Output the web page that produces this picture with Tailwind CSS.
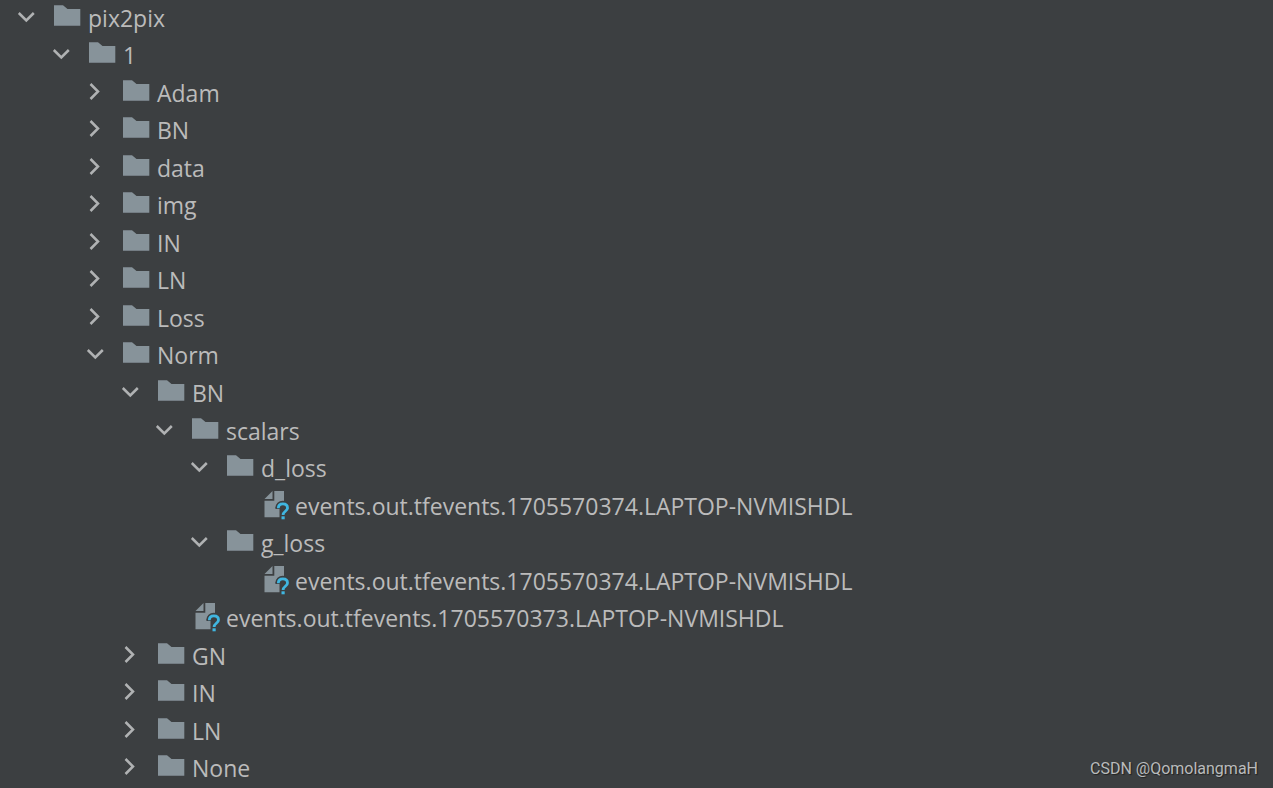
<!DOCTYPE html>
<html lang="en">
<head>
<meta charset="utf-8">
<meta name="viewport" content="width=device-width, initial-scale=1">
<title>pix2pix</title>
<script src="https://cdn.jsdelivr.net/npm/@tailwindcss/browser@4"></script>
</head>
<body class="bg-[#3c3f41] text-[#bbbbbb] font-['Open_Sans','Noto_Sans',sans-serif]">
<svg class="hidden" aria-hidden="true">
  <symbol id="down" viewBox="0 0 20 32"><path d="M2.800 10l7.500 7.500 7.500-7.500" fill="none" stroke="#b0b2b3" stroke-width="2.500"/></symbol>
  <symbol id="right" viewBox="0 0 20 32"><path d="M5.500 6l7.500 7.500-7.500 7.500" fill="none" stroke="#b0b2b3" stroke-width="2.500"/></symbol>
  <symbol id="folder" viewBox="0 0 32 32"><path d="M2 2.200h9l4.500 3.800H28.300V22.800H2z" fill="#87939a"/></symbol>
  <symbol id="file" viewBox="0 0 32 32">
    <path d="M13.500 0v8H5.500z" fill="#87939a"/>
    <path d="M15.300 0h9.700v10.500c-5 0-8.500 3-8.500 7.500h4v8.300H5.500V9.700h9.800z" fill="#87939a"/>
    <path d="M19.300 17.300c0-2.900 1.900-4.500 4.600-4.500s4.600 1.500 4.600 4.100c0 3.400-4.400 3.400-4.400 7.100" fill="none" stroke="#3c3f41" stroke-width="6"/>
    <path d="M19.300 17.300c0-2.900 1.900-4.500 4.600-4.500s4.600 1.500 4.600 4.100c0 3.400-4.400 3.400-4.400 7.100" fill="none" stroke="#40b6e0" stroke-width="2.800"/>
    <path d="M22.500 25.300h3.200v3h-3.200z" fill="#40b6e0"/>
  </symbol>
</svg>
<main class="relative min-h-screen border-b border-[#343236]">
  <ul id="tree" role="tree" aria-label="Project files" class="grid min-h-screen auto-rows-fr text-[23px] leading-8"></ul>
  <p class="absolute right-[15px] bottom-[7px] font-[Roboto,sans-serif] text-base leading-6 text-[#b9bbbc] [text-shadow:1px_1px_1px_#222]">CSDN @QomolangmaH</p>
</main>
<script>
const indents = ['pl-4', 'pl-[51px]', 'pl-[85px]', 'pl-[120px]', 'pl-[154px]', 'pl-[189px]', 'pl-[223px]'];
const entries = [
  [0, 'pix2pix', 'down'], [1, '1', 'down'],
  [2, 'Adam', 'right'], [2, 'BN', 'right'], [2, 'data', 'right'], [2, 'img', 'right'],
  [2, 'IN', 'right'], [2, 'LN', 'right'], [2, 'Loss', 'right'], [2, 'Norm', 'down'],
  [3, 'BN', 'down'], [4, 'scalars', 'down'], [5, 'd_loss', 'down'],
  [6, 'events.out.tfevents.1705570374.LAPTOP-NVMISHDL'],
  [5, 'g_loss', 'down'],
  [6, 'events.out.tfevents.1705570374.LAPTOP-NVMISHDL'],
  [4, 'events.out.tfevents.1705570373.LAPTOP-NVMISHDL'],
  [3, 'GN', 'right'], [3, 'IN', 'right'], [3, 'LN', 'right'], [3, 'None', 'right'],
];
document.getElementById('tree').innerHTML = entries.map(([level, name, state]) => `
  <li role="treeitem" aria-level="${level + 1}" ${state ? `aria-expanded="${state === 'down'}"` : ''} class="flex items-center ${indents[level]}">
    ${state ? `<button type="button" aria-label="Toggle ${name}" class="h-8 w-5 shrink-0"><svg class="h-8 w-5"><use href="#${state}"/></svg></button>` : '<span class="w-5 shrink-0"></span>'}
    <svg class="ml-4 mr-1 h-8 w-8 shrink-0" aria-hidden="true"><use href="#${state ? 'folder' : 'file'}"/></svg>
    <span class="whitespace-nowrap pb-0.5">${name}</span>
  </li>`).join('');
</script>
</body>
</html>
